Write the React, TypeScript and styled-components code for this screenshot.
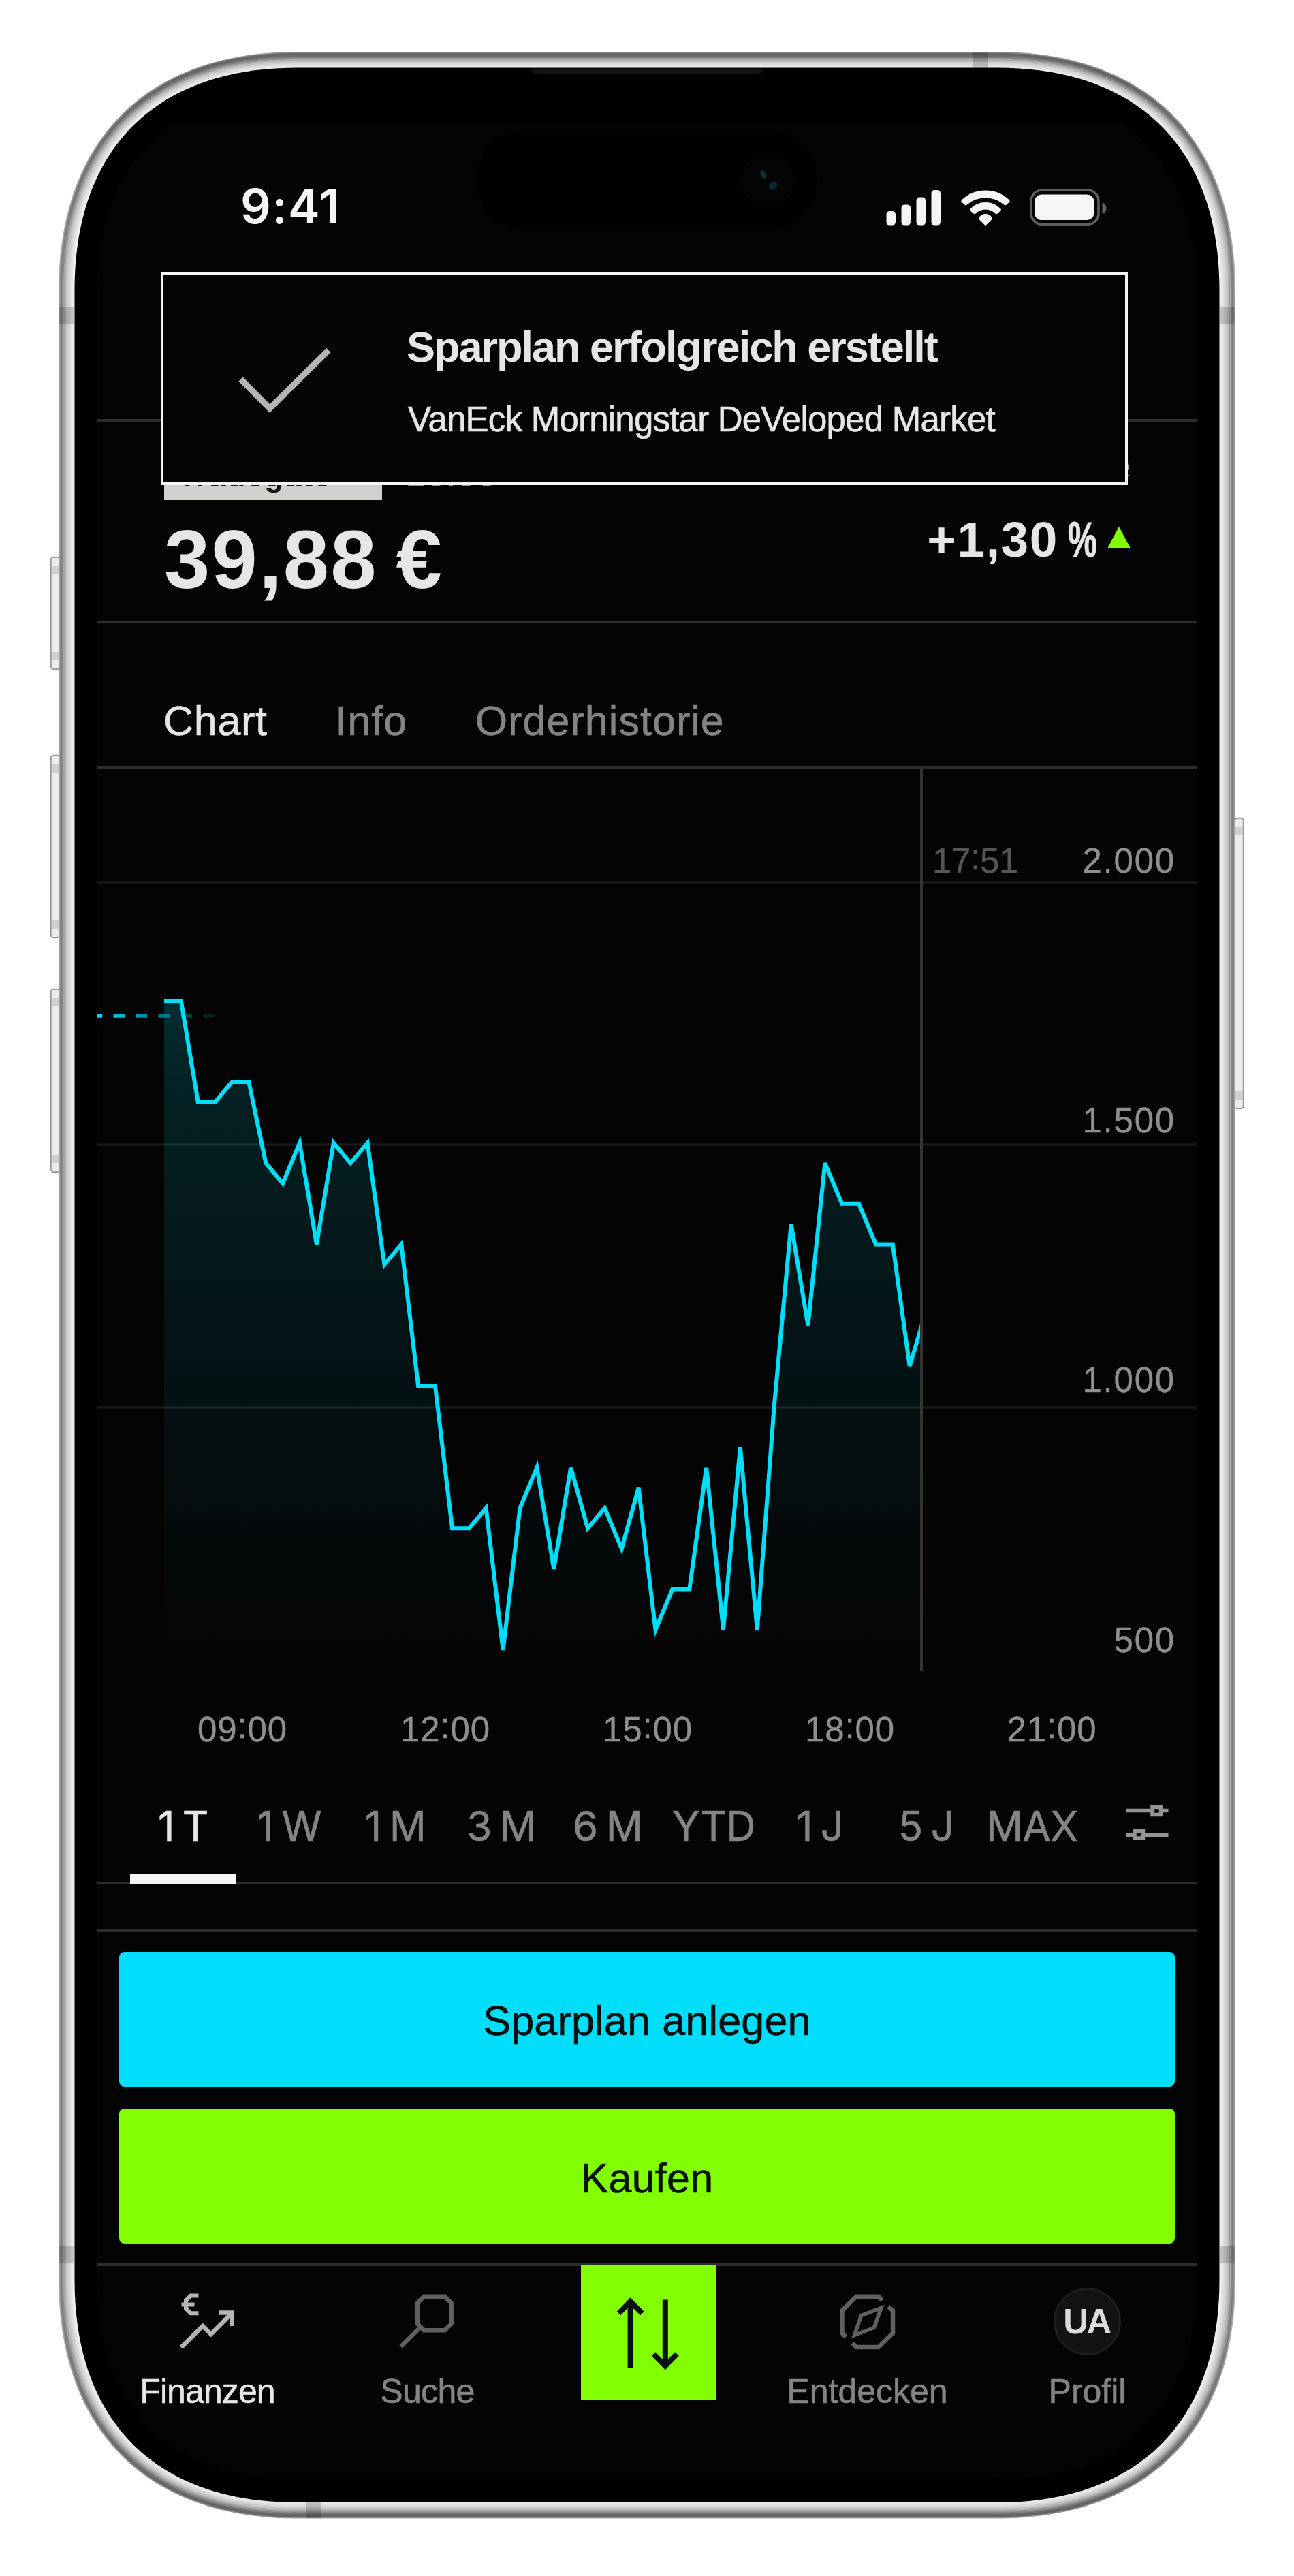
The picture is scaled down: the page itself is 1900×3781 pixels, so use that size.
import React from "react";
import styled, { createGlobalStyle, css } from "styled-components";

const sans = `"Liberation Sans", Arial, Helvetica, sans-serif`;
const grotesk = `Inter, "Liberation Sans", sans-serif`;

const color = {
  screen: "#040404",
  line: "#2b2d2c",
  text: "#e6e6e6",
  muted: "#838483",
  axis: "#8f8f8e",
  cyan: "#00defb",
  green: "#82ff00",
};

/* Book weight: a touch heavier than the regular cut. */
const book = css`
  -webkit-text-stroke: 0.6px currentColor;
`;

const GlobalStyle = createGlobalStyle`
  html, body { margin: 0; padding: 0; background: #ffffff; }
  *, *::before, *::after { box-sizing: border-box; }
`;

const Page = styled.main`
  position: relative;
  width: 1900px;
  height: 3781px;
  padding: 183px 143px 0;
  overflow: hidden;
  background: #ffffff;
  font-family: ${sans};
`;

const DeviceArt = styled.svg`
  position: absolute;
  inset: 0;
  display: block;
`;

const Screen = styled.div`
  position: relative;
  display: flex;
  flex-direction: column;
  width: 1614px;
  color: ${color.text};
`;

/* ---------- status bar ---------- */

const StatusBar = styled.header`
  display: flex;
  align-items: flex-start;
  justify-content: space-between;
  height: 436px;
  padding: 80px 131px 0 210px;
  border-bottom: 4px solid ${color.line};
`;

const Clock = styled.span`
  font: 600 70px/80px ${grotesk};
  letter-spacing: 1.4px;
  color: #f5f5f5;
`;

const StatusIcons = styled.svg`
  display: block;
  margin-top: 12px;
`;

/* ---------- toast ---------- */

const Toast = styled.section`
  position: absolute;
  top: 216px;
  left: 93px;
  display: flex;
  width: 1420px;
  height: 313px;
  background: ${color.screen};
  border: 4px solid #f3f4f3;
`;

const ToastIcon = styled.svg`
  flex: none;
  margin: 104px 95px 0 105px;
`;

const ToastBody = styled.div`
  display: flex;
  flex-direction: column;
  padding-top: 63px;
  white-space: nowrap;
`;

const ToastTitle = styled.strong`
  font-size: 63px;
  font-weight: 700;
  line-height: 86px;
  letter-spacing: -2px;
`;

const ToastText = styled.span`
  margin-top: 16px;
  padding-left: 2px;
  font-size: 51px;
  line-height: 96px;
  letter-spacing: -0.78px;
  ${book}
`;

/* ---------- quote ---------- */

const Quote = styled.section`
  display: flex;
  justify-content: space-between;
  height: 296px;
  padding: 0 97px 0 98px;
  border-bottom: 4px solid ${color.line};
`;

const QuoteMain = styled.div`
  padding-top: 55px;
`;

const Venue = styled.div`
  display: flex;
  height: 60px;
`;

const VenueBadge = styled.span`
  width: 320px;
  padding-left: 20px;
  background: #d0d1cf;
  color: #101413;
  font-size: 45px;
  font-weight: 700;
  line-height: 49px;
  letter-spacing: 1.5px;
`;

const VenueTime = styled.span`
  margin-left: 35px;
  color: ${color.axis};
  font: 500 48px/45px ${grotesk};
  letter-spacing: -0.8px;
`;

const Price = styled.div`
  font-size: 121px;
  font-weight: 700;
  line-height: 174px;
  letter-spacing: 2.2px;
  word-spacing: -9px;
`;

const QuoteSide = styled.div`
  display: flex;
  flex-direction: column;
  align-items: flex-end;
  padding-top: 38px;
`;

const Period = styled.span`
  color: ${color.axis};
  font-size: 51px;
  line-height: 57px;
`;

const Change = styled.div`
  display: flex;
  align-items: center;
  font-size: 73px;
  font-weight: 700;
  line-height: 155px;
  letter-spacing: 1.6px;
`;

const Percent = styled.span`
  width: 42px;
  margin-left: 14px;
  letter-spacing: 0;
  transform: scaleX(0.66);
  transform-origin: 0 50%;
  -webkit-text-stroke: 1px currentColor;
`;

const Up = styled.svg`
  margin: 0 0 6px 16px;
`;

/* ---------- tabs ---------- */

const Tabs = styled.nav`
  display: flex;
  gap: 99.5px;
  height: 214px;
  padding: 109px 0 0 97px;
  border-bottom: 4px solid ${color.line};
`;

const Tab = styled.span<{ $active?: boolean }>`
  color: ${(p) => (p.$active ? color.text : color.muted)};
  font-size: 61px;
  line-height: 68px;
  letter-spacing: ${(p) => (p.$active ? 0.7 : 1.05)}px;
  ${book}
`;

/* ---------- chart ---------- */

const ChartSvg = styled.svg`
  display: block;
`;

const AxisText = styled.text<{ $dim?: boolean; $track: number }>`
  fill: ${(p) => (p.$dim ? "#565656" : color.axis)};
  stroke: ${(p) => (p.$dim ? "#565656" : color.axis)};
  stroke-width: 0.4px;
  font-family: ${sans};
  font-size: 51px;
  letter-spacing: ${(p) => p.$track}px;
`;

/* ---------- ranges ---------- */

const Ranges = styled.nav`
  display: flex;
  height: 157px;
  padding-left: 48px;
  box-shadow: inset 0 -4px 0 ${color.line};
`;

const Range = styled.span<{ $active?: boolean }>`
  width: 155.8px;
  height: 157px;
  border-bottom: ${(p) => (p.$active ? "16px solid #f4f5f4" : "0")};
  color: ${(p) => (p.$active ? color.text : color.muted)};
  font: 400 60px/143px ${grotesk};
  text-align: center;
  white-space: nowrap;
  word-spacing: -4px;
  letter-spacing: -0.7px;
  ${book}
`;

const Settings = styled.svg`
  margin: 41px 0 0 60px;
`;

/* ---------- actions ---------- */

const Actions = styled.section`
  display: flex;
  flex-direction: column;
  gap: 32.5px;
  height: 490px;
  margin-top: 66px;
  padding: 28.5px 32px 0;
  border-top: 4px solid ${color.line};
`;

const Action = styled.button<{ $tone: string }>`
  height: 198px;
  padding: 6px 0 0;
  border: 0;
  border-radius: 8px;
  background: ${(p) => p.$tone};
  color: #06100f;
  font: 400 61px/1 ${sans};
  letter-spacing: 0.2px;
  ${book}
`;

/* ---------- bottom bar ---------- */

const BottomBar = styled.nav`
  display: grid;
  grid-template-columns: repeat(5, 323px);
  border-top: 4px solid ${color.line};
`;

const NavItem = styled.div<{ $active?: boolean }>`
  display: flex;
  flex-direction: column;
  align-items: center;
  color: ${(p) => (p.$active ? color.text : color.muted)};
  font-size: 50px;
  line-height: 60px;
`;

const NavLabel = styled.span<{ $tight?: number }>`
  letter-spacing: ${(p) => p.$tight ?? 0}px;
  ${book}
`;

const IconSlot = styled.div`
  display: flex;
  justify-content: center;
  width: 323px;
  height: 154px;
`;

const Avatar = styled.div`
  width: 99px;
  height: 99px;
  margin-top: 32px;
  padding-right: 2px;
  border: 3px solid #1c1f1e;
  border-radius: 50%;
  background: #111312;
  color: #dcdcda;
  font-size: 51px;
  font-weight: 700;
  line-height: 94px;
  letter-spacing: -2.6px;
  text-align: center;
`;

const Trade = styled.div`
  width: 198px;
  height: 198px;
  margin: -1px 0 0 3px;
  background: ${color.green};
`;

/* ---------- device drawing ---------- */

/** Continuous-corner outline of the phone body, moved inwards by d. */
const outline = (d: number) => {
  const l = 86 + d;
  const r = 1814 - d;
  const t = 76 + d;
  const b = 3696.5 - d;
  const e = 350 - d;
  const mid = 92.3 - 0.293 * d;
  const c = (8 * mid - e) / 3;
  return (
    `M${l + e} ${t}H${r - e}C${r - c} ${t} ${r} ${t + c} ${r} ${t + e}` +
    `V${b - e}C${r} ${b - c} ${r - c} ${b} ${r - e} ${b}` +
    `H${l + e}C${l + c} ${b} ${l} ${b - c} ${l} ${b - e}` +
    `V${t + e}C${l} ${t + c} ${l + c} ${t} ${l + e} ${t}Z`
  );
};

/* [inset, grey on the long sides, grey on the short sides] */
const rail: [number, number, number][] = [
  [0, 172, 150],
  [1.5, 142, 108],
  [3, 126, 98],
  [5, 140, 108],
  [7, 164, 128],
  [9, 182, 150],
  [11, 196, 174],
  [13, 208, 192],
  [15, 216, 206],
  [17, 226, 218],
  [19, 233, 226],
  [21, 241, 233],
];

const grey = (v: number) => `rgb(${v},${v},${v - 2})`;

const sideButtons = [
  { x: 74, y: 817, h: 166 },
  { x: 74, y: 1108, h: 269 },
  { x: 74, y: 1451, h: 270 },
  { x: 1812, y: 1200, h: 428 },
];

function Device() {
  return (
    <DeviceArt width="1900" height="3781" viewBox="0 0 1900 3781" aria-hidden>
      <defs>
        {rail.map(([, side, end], i) => (
          <linearGradient key={i} id={`rail${i}`} gradientUnits="userSpaceOnUse" x1="0" x2="0" y1="76" y2="3697">
            <stop offset="0.012" stopColor={grey(end)} />
            <stop offset="0.075" stopColor={grey(side)} />
            <stop offset="0.925" stopColor={grey(side)} />
            <stop offset="0.988" stopColor={grey(end)} />
          </linearGradient>
        ))}
        <clipPath id="display">
          <rect x="143" y="183" width="1614" height="3460" />
        </clipPath>
      </defs>
      {sideButtons.map((b) => (
        <g key={b.y}>
          <rect x={b.x + 0.75} y={b.y + 0.75} width="13" height={b.h - 1.5} rx="4" fill="#ececea" stroke="#969694" strokeWidth="1.8" />
          <rect x={b.x + 2} y={b.y + 14} width="11" height="12" fill="#cfcfcd" />
          <rect x={b.x + 2} y={b.y + b.h - 26} width="11" height="12" fill="#cfcfcd" />
        </g>
      ))}
      {rail.map(([d], i) => (
        <path key={i} d={outline(d)} fill={`url(#rail${i})`} />
      ))}
      <g fill="#000" fillOpacity="0.17">
        <rect x="86" y="451" width="23" height="24" />
        <rect x="1791" y="451" width="23" height="24" />
        <rect x="86" y="3297" width="23" height="24" />
        <rect x="1791" y="3297" width="23" height="24" />
        <rect x="1428" y="77" width="23" height="23" />
        <rect x="449" y="3673" width="23" height="23" />
      </g>
      <path d={outline(23.5)} fill="#000" />
      <path d={outline(57)} fill={color.screen} clipPath="url(#display)" />
      <path d="M780 101H1121L1116 109H784Z" fill="#0f1312" />
      <rect x="699" y="191" width="500" height="146.500" rx="73.250" fill="#000" />
      <circle cx="1127.500" cy="264.500" r="40" fill="#030505" />
      <ellipse cx="1121" cy="256" rx="4" ry="6.500" transform="rotate(-30 1121 256)" fill="#122c33" />
      <ellipse cx="1135" cy="273" rx="5" ry="7" transform="rotate(45 1135 273)" fill="#062a34" />
    </DeviceArt>
  );
}

/* ---------- price series ---------- */

const levels = [
  0, 0, 5, 5, 4, 4, 8, 9, 7, 12, 7, 8, 7, 13, 12, 19, 19, 26, 26, 25, 32, 25, 23, 28, 23, 26, 25, 27, 24, 31, 29, 29, 23,
  31, 22, 31, 20, 11, 16, 8, 10, 10, 12, 12, 18, 15.2,
];
const points = levels.map((v, i) => `${(98 + i * 24.88).toFixed(1)},${(340 + v * 29.78).toFixed(1)}`);

const gridLines = [166, 551, 937];
const prices: [string, number][] = [
  ["2.000", 151.5],
  ["1.500", 533],
  ["1.000", 914],
  ["500", 1295.5],
];
const times: [string, number][] = [
  ["09:00", 213],
  ["12:00", 511],
  ["15:00", 808],
  ["18:00", 1105],
  ["21:00", 1401.5],
];

/** Clock time with the colon centred on the height of the figures. */
function Time({ value }: { value: string }) {
  const [hours, minutes] = value.split(":");
  return (
    <>
      {hours}
      <tspan dy="-5">:</tspan>
      <tspan dy="5">{minutes}</tspan>
    </>
  );
}

function Chart() {
  return (
    <ChartSvg width="1614" height="1480" viewBox="0 0 1614 1480">
      <defs>
        <linearGradient id="area" gradientUnits="userSpaceOnUse" x1="0" x2="0" y1="340" y2="1294">
          <stop offset="0" stopColor={color.cyan} stopOpacity="0.19" />
          <stop offset="0.150" stopColor={color.cyan} stopOpacity="0.125" />
          <stop offset="0.500" stopColor={color.cyan} stopOpacity="0.075" />
          <stop offset="1" stopColor={color.cyan} stopOpacity="0" />
        </linearGradient>
        <linearGradient id="fade" gradientUnits="userSpaceOnUse" x1="0" x2="190" y1="0" y2="0">
          <stop offset="0" stopColor={color.cyan} />
          <stop offset="1" stopColor={color.cyan} stopOpacity="0" />
        </linearGradient>
        <clipPath id="past">
          <rect x="98" y="0" width="1110" height="1400" />
        </clipPath>
      </defs>
      {gridLines.map((y) => (
        <path key={y} d={`M0 ${y}H1614`} stroke="#191b1b" strokeWidth="3.500" />
      ))}
      <g clipPath="url(#past)">
        <polygon points={`98,1294 ${points.join(" ")} 1217,1294`} fill="url(#area)" />
      </g>
      <path d="M-9.500 362H190" stroke="url(#fade)" strokeWidth="5.500" strokeDasharray="16.500 16.500" />
      <path d="M1210 0V1324" stroke="#333434" strokeWidth="4" />
      <g clipPath="url(#past)">
        <polyline points={points.join(" ")} fill="none" stroke={color.cyan} strokeWidth="6" strokeMiterlimit="4" />
      </g>
      <AxisText $dim $track={-0.3} x="1226" y="151.500">
        <Time value="17:51" />
      </AxisText>
      {prices.map(([label, y]) => (
        <AxisText key={label} $track={1.8} x="1583" y={y} textAnchor="end">
          {label}
        </AxisText>
      ))}
      {times.map(([label, x]) => (
        <AxisText key={label} $track={0.9} x={x} y="1427" textAnchor="middle">
          <Time value={label} />
        </AxisText>
      ))}
    </ChartSvg>
  );
}

const ranges = ["1 T", "1 W", "1 M", "3 M", "6 M", "YTD", "1 J", "5 J", "MAX"];

export default function App() {
  return (
    <>
      <GlobalStyle />
      <Page>
        <Device />
        <Screen>
          <StatusBar>
            <Clock>9:41</Clock>
            <StatusIcons width="326" height="60" viewBox="1300 275 326 60">
              <g fill="#f5f5f5">
                <rect x="1301.500" y="310" width="13.500" height="20.500" rx="4.500" />
                <rect x="1323.500" y="300.500" width="13.500" height="30" rx="4.500" />
                <rect x="1345.500" y="289.500" width="13.500" height="41" rx="4.500" />
                <rect x="1367.500" y="279" width="13.500" height="51.500" rx="4.500" />
                <path d="M1412 293.500Q1410.500 295.200 1412 296.800L1417 301Q1418.300 302 1419.600 300.800Q1431 290.500 1447 290.500T1474.400 300.800Q1475.700 302 1477 301L1482 296.800Q1483.500 295.200 1482 293.500Q1467.500 279.500 1447 279.500T1412 293.500Z" />
                <path d="M1424.500 306.500Q1423.500 308 1424.700 309.200L1430 314Q1431 314.800 1432.300 313.800Q1438.500 307.500 1447 307.500T1461.700 313.800Q1463 314.800 1464 314L1469.300 309.200Q1470.500 308 1469.500 306.500Q1460.500 297 1447 297T1424.500 306.500Z" />
                <path d="M1437.300 319.500Q1436.500 321 1437.500 322L1446 330.500Q1447 331.300 1448 330.500L1456.500 322Q1457.500 321 1456.700 319.500Q1453 314 1447 314T1437.300 319.500Z" />
                <rect x="1519" y="285.500" width="87.500" height="37.500" rx="10.500" />
              </g>
              <rect x="1514" y="279" width="99" height="50.500" rx="16" fill="none" stroke="#5e5e5e" strokeWidth="3.500" />
              <path d="M1618.500 297Q1624.500 300 1624.500 305.500T1618.500 314Z" fill="#646464" />
            </StatusIcons>
          </StatusBar>

          <Quote>
            <QuoteMain>
              <Venue>
                <VenueBadge>Tradegate</VenueBadge>
                <VenueTime>20:00</VenueTime>
              </Venue>
              <Price>39,88 €</Price>
            </QuoteMain>
            <QuoteSide>
              <Period>Heute</Period>
              <Change>
                +1,30 <Percent>%</Percent>
                <Up width="34" height="32" viewBox="0 0 34 32">
                  <path d="M17 0L34 32H0Z" fill={color.green} />
                </Up>
              </Change>
            </QuoteSide>
          </Quote>

          <Tabs>
            <Tab $active>Chart</Tab>
            <Tab>Info</Tab>
            <Tab>Orderhistorie</Tab>
          </Tabs>

          <Chart />

          <Ranges>
            {ranges.map((r, i) => (
              <Range key={r} $active={i === 0}>
                {r}
              </Range>
            ))}
            <Settings width="64" height="50" viewBox="0 0 64 50" fill="none" stroke="#949494" strokeWidth="5.500">
              <path d="M1 7.500H37M54 7.500H62.500M1 43.500H11M28 43.500H62.500" />
              <path d="M39 2.500H51.500V13.500H39ZM13 37.500H25.500V48H13Z" />
            </Settings>
          </Ranges>

          <Actions>
            <Action $tone={color.cyan}>Sparplan anlegen</Action>
            <Action $tone={color.green}>Kaufen</Action>
          </Actions>

          <BottomBar>
            <NavItem $active>
              <IconSlot>
                <svg width="323" height="154" viewBox="143 3326 323 154" fill="none" stroke="#b5b5b3" strokeWidth="6.500">
                  <path d="M266 3445.500L297.600 3414L309.700 3426L340 3395.500M322 3394.600H340.800V3414" />
                  <path d="M291.500 3369.600H280L273 3376.500V3388.500L280 3395.300H291.500M266.500 3382.500H285.500" strokeWidth="6" />
                </svg>
              </IconSlot>
              <NavLabel $tight={-0.9}>Finanzen</NavLabel>
            </NavItem>
            <NavItem>
              <IconSlot>
                <svg width="323" height="154" viewBox="466 3326 323 154" fill="none" stroke="#5f605f" strokeWidth="6.500">
                  <path d="M622.500 3370.700H653L662.700 3380.300V3410.700L653 3420.300H622.500L613 3410.700V3380.300ZM617.500 3415.500L588.500 3444.500" />
                </svg>
              </IconSlot>
              <NavLabel $tight={-0.7}>Suche</NavLabel>
            </NavItem>
            <NavItem>
              <Trade>
                <svg width="198" height="198" viewBox="853 3325 198 198" fill="none" stroke="#06100f" strokeWidth="8">
                  <path d="M925.600 3475V3379M908.500 3395.500L925.600 3378L943 3395.500" />
                  <path d="M976.800 3375.500V3472M959.500 3455L976.800 3472.500L994 3455" />
                </svg>
              </Trade>
            </NavItem>
            <NavItem>
              <IconSlot>
                <svg width="323" height="154" viewBox="1112 3326 323 154" fill="none" stroke="#5f605f" strokeWidth="6.500">
                  <path d="M1242 3430L1236.500 3424.500V3391.400L1257.400 3370.700H1290L1295.500 3376.500M1304.500 3385.500L1311 3391.500V3424.500L1290 3445H1257.400L1251.500 3439" />
                  <path d="M1294 3387.500L1283.300 3416.500L1254.500 3427.500L1264.500 3398.500Z" strokeWidth="5.500" />
                </svg>
              </IconSlot>
              <NavLabel>Entdecken</NavLabel>
            </NavItem>
            <NavItem>
              <IconSlot>
                <Avatar>UA</Avatar>
              </IconSlot>
              <NavLabel>Profil</NavLabel>
            </NavItem>
          </BottomBar>

          <Toast>
            <ToastIcon width="157" height="110" viewBox="345 506 157 110">
              <path d="M353.500 555.500L396 598.500L482.500 513" fill="none" stroke="#b5b5b3" strokeWidth="9" />
            </ToastIcon>
            <ToastBody>
              <ToastTitle>Sparplan erfolgreich erstellt</ToastTitle>
              <ToastText>VanEck Morningstar DeVeloped Market</ToastText>
            </ToastBody>
          </Toast>
        </Screen>
      </Page>
    </>
  );
}
